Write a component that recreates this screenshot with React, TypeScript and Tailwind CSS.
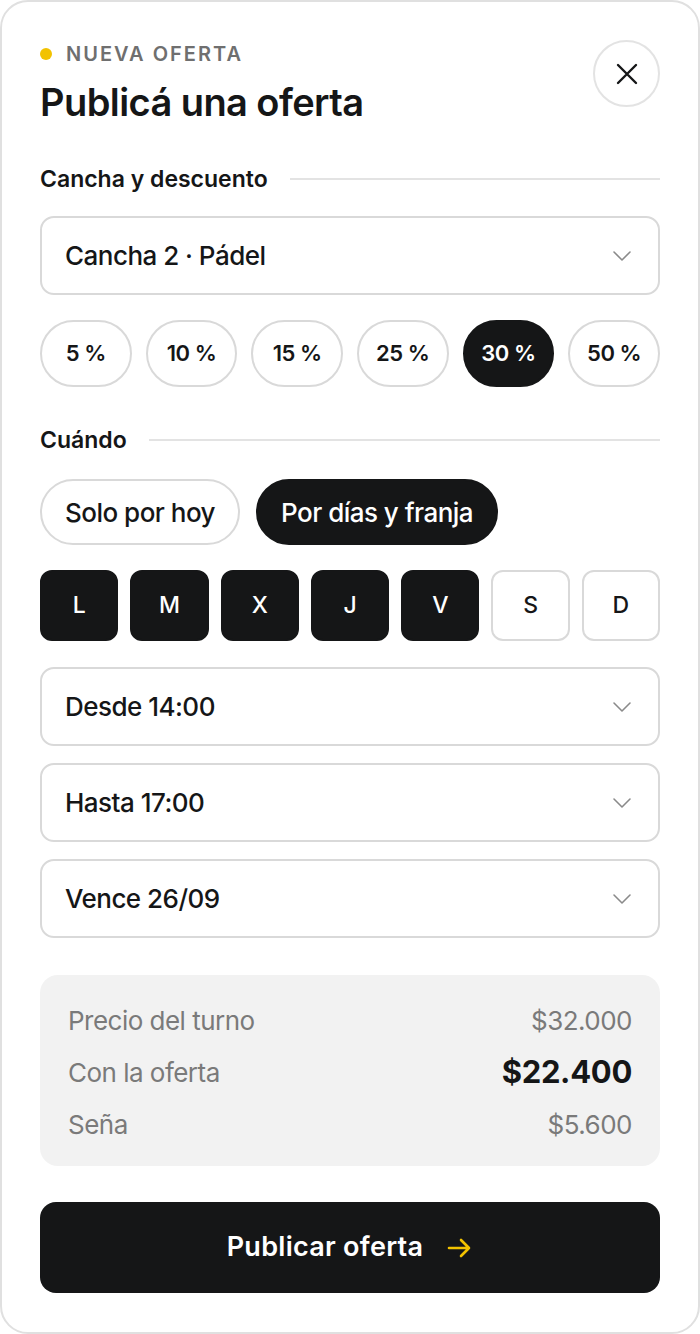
import React, { useState } from 'react';

const Chevron = () => (
  <svg width="20" height="20" viewBox="0 0 20 20" fill="none" className="text-[#8a8a8a]">
    <path d="M2 6l8 8 8-8" stroke="currentColor" strokeWidth="1.6" strokeLinecap="round" strokeLinejoin="round" />
  </svg>
);

const SelectBox: React.FC<{ label: string }> = ({ label }) => (
  <button className="flex h-[79px] w-full items-center justify-between rounded-[14px] border-2 border-[#d9d9d9] bg-white pl-[23px] pr-[26px] text-left">
    <span className="text-[26px] font-medium tracking-[-0.02em] text-[#151617]">{label}</span>
    <Chevron />
  </button>
);

const SectionTitle: React.FC<{ title: string }> = ({ title }) => (
  <div className="flex h-[28px] items-center gap-[22px]">
    <span className="text-[23px] font-semibold tracking-[0em] text-[#151617]">{title}</span>
    <div className="h-[2px] flex-1 bg-[#e3e3e3]" />
  </div>
);

export default function App() {
  const [discount, setDiscount] = useState('30 %');
  const [mode, setMode] = useState('franja');
  const [days, setDays] = useState<string[]>(['L', 'M', 'X', 'J', 'V']);

  const discounts = ['5 %', '10 %', '15 %', '25 %', '30 %', '50 %'];
  const weekDays = ['L', 'M', 'X', 'J', 'V', 'S', 'D'];

  return (
    <div className="min-h-[1334px] bg-white" style={{ fontFamily: 'Inter, "Noto Sans", sans-serif' }}>
      <div className="flex h-[1334px] flex-col rounded-[28px] border-2 border-[#e0e0e0] bg-white px-[38px] pt-[39px]">
        {/* header */}
        <div className="flex items-start justify-between">
          <div className="pt-[1px]">
            <div className="flex h-[24px] items-center gap-[14px]">
              <span className="h-[12px] w-[12px] rounded-full bg-[#f2c200]" />
              <span className="text-[20px] font-semibold tracking-[0.1em] text-[#6f6f6f]">NUEVA OFERTA</span>
            </div>
            <h1 className="mt-[14px] text-[38px] font-semibold leading-[44px] tracking-[-0.015em] text-[#151617]">
              Publicá una oferta
            </h1>
          </div>
          <button className="mt-[-1px] flex h-[67px] w-[67px] items-center justify-center rounded-full border-2 border-[#e3e3e3] bg-white">
            <svg width="22" height="22" viewBox="0 0 22 22" fill="none">
              <path d="M2 2l18 18M20 2L2 20" stroke="#151617" strokeWidth="2.4" strokeLinecap="round" />
            </svg>
          </button>
        </div>

        <div className="mt-[41px]">
          <SectionTitle title="Cancha y descuento" />
        </div>

        <div className="mt-[23px]">
          <SelectBox label="Cancha 2 · Pádel" />
        </div>

        <div className="mt-[25px] grid grid-cols-6 gap-[14px]">
          {discounts.map((d) => (
            <button
              key={d}
              onClick={() => setDiscount(d)}
              className={
                discount === d
                  ? 'flex h-[67px] items-center justify-center rounded-full border-2 border-[#151617] bg-[#151617] text-[22px] font-semibold tracking-[-0.02em] text-white'
                  : 'flex h-[67px] items-center justify-center rounded-full border-2 border-[#d9d9d9] bg-white text-[22px] font-semibold tracking-[-0.02em] text-[#151617]'
              }
            >
              {d}
            </button>
          ))}
        </div>

        <div className="mt-[39px]">
          <SectionTitle title="Cuándo" />
        </div>

        <div className="mt-[25px] flex gap-[16px]">
          <button
            onClick={() => setMode('hoy')}
            className={
              mode === 'hoy'
                ? 'flex h-[66px] items-center rounded-full border-2 border-[#151617] bg-[#151617] px-[23px] text-[26px] font-medium tracking-[-0.02em] text-white'
                : 'flex h-[66px] items-center rounded-full border-2 border-[#d9d9d9] bg-white px-[23px] text-[26px] font-medium tracking-[-0.02em] text-[#151617]'
            }
          >
            Solo por hoy
          </button>
          <button
            onClick={() => setMode('franja')}
            className={
              mode === 'franja'
                ? 'flex h-[66px] items-center rounded-full border-2 border-[#151617] bg-[#151617] px-[23px] text-[26px] font-medium tracking-[-0.02em] text-white'
                : 'flex h-[66px] items-center rounded-full border-2 border-[#d9d9d9] bg-white px-[23px] text-[26px] font-medium tracking-[-0.02em] text-[#151617]'
            }
          >
            Por días y franja
          </button>
        </div>

        <div className="mt-[25px] grid grid-cols-7 gap-[12px]">
          {weekDays.map((d) => {
            const on = days.includes(d);
            return (
              <button
                key={d}
                onClick={() => setDays((prev) => (prev.includes(d) ? prev.filter((x) => x !== d) : [...prev, d]))}
                className={
                  on
                    ? 'flex h-[71px] items-center justify-center rounded-[12px] border-2 border-[#151617] bg-[#151617] text-[23px] font-medium text-white'
                    : 'flex h-[71px] items-center justify-center rounded-[12px] border-2 border-[#d9d9d9] bg-white text-[23px] font-medium text-[#151617]'
                }
              >
                {d}
              </button>
            );
          })}
        </div>

        <div className="mt-[26px] flex flex-col gap-[17px]">
          <SelectBox label="Desde 14:00" />
          <SelectBox label="Hasta 17:00" />
          <SelectBox label="Vence 26/09" />
        </div>

        <div className="mt-[37px] flex flex-col rounded-[18px] bg-[#f2f2f2] px-[28px] pt-[19px] pb-[16px]">
          <div className="flex h-[52px] items-center justify-between text-[26px] tracking-[-0.02em] text-[#7a7a7a]">
            <span>Precio del turno</span>
            <span>$32.000</span>
          </div>
          <div className="flex h-[52px] items-center justify-between text-[26px] tracking-[-0.02em] text-[#7a7a7a]">
            <span>Con la oferta</span>
            <span className="text-[31px] font-bold tracking-[-0.01em] text-[#151617]">$22.400</span>
          </div>
          <div className="flex h-[52px] items-center justify-between text-[26px] tracking-[-0.02em] text-[#7a7a7a]">
            <span>Seña</span>
            <span>$5.600</span>
          </div>
        </div>

        <button className="mt-[36px] flex h-[91px] w-full items-center justify-center gap-[24px] rounded-[16px] bg-[#151617]">
          <span className="text-[27px] font-semibold tracking-[0.01em] text-white">Publicar oferta</span>
          <svg width="26" height="22" viewBox="0 0 26 22" fill="none">
            <path d="M2 11h20M14 3l8 8-8 8" stroke="#f2c200" strokeWidth="2.6" strokeLinecap="round" strokeLinejoin="round" />
          </svg>
        </button>
      </div>
    </div>
  );
}
